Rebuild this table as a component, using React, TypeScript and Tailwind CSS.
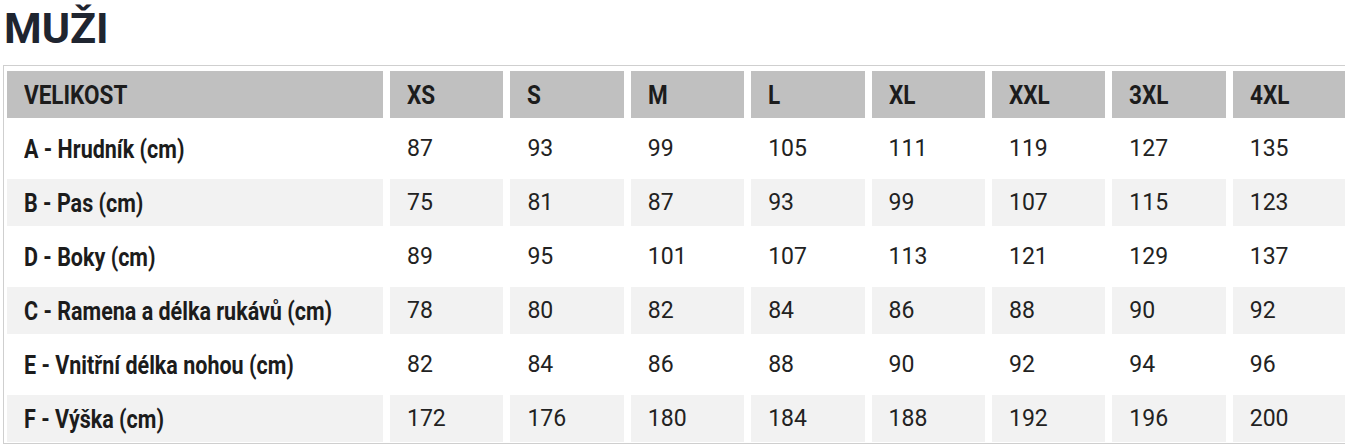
import React from 'react';

const sizes = ['XS', 'S', 'M', 'L', 'XL', 'XXL', '3XL', '4XL'];

const rows: { label: string; values: number[] }[] = [
    { label: 'A - Hrudník (cm)', values: [87, 93, 99, 105, 111, 119, 127, 135] },
    { label: 'B - Pas (cm)', values: [75, 81, 87, 93, 99, 107, 115, 123] },
    { label: 'D - Boky (cm)', values: [89, 95, 101, 107, 113, 121, 129, 137] },
    { label: 'C - Ramena a délka rukávů (cm)', values: [78, 80, 82, 84, 86, 88, 90, 92] },
    { label: 'E - Vnitřní délka nohou (cm)', values: [82, 84, 86, 88, 90, 92, 94, 96] },
    { label: 'F - Výška (cm)', values: [172, 176, 180, 184, 188, 192, 196, 200] },
];

// condensed bold look: larger Roboto squeezed horizontally
const HeadText: React.FC<{ children: React.ReactNode }> = ({ children }) => (
    <span className="inline-block origin-left scale-x-[0.9] text-[25px] font-bold whitespace-nowrap">{children}</span>
);

const LabelText: React.FC<{ children: React.ReactNode }> = ({ children }) => (
    <span className="inline-block origin-left scale-x-[0.86] text-[25px] font-bold whitespace-nowrap">{children}</span>
);

const App: React.FC = () => {
    return (
        <div className="w-[1345px] h-[446px] overflow-hidden bg-white font-['Roboto',sans-serif]">
            <h1 className="pl-[4px] pt-[4px] h-[65px] text-[43px] leading-[48px] font-bold text-[#1f2530]">MUŽI</h1>
            <div className="ml-[3px] w-[1360px] border border-[#cfcfcf] pt-[5px] pl-[3px] pb-[1px]">
                <div className="grid grid-cols-[376px_repeat(8,113.4px)] gap-x-[7px] gap-y-[7px] text-[#1c1c1c]">
                    <div className="h-[47px] bg-[#c0c0c0] pl-[17px] pt-[2px] flex items-center">
                        <HeadText>VELIKOST</HeadText>
                    </div>
                    {sizes.map((s) => (
                        <div key={s} className="h-[47px] bg-[#c0c0c0] pl-[17px] pt-[2px] flex items-center">
                            <HeadText>{s}</HeadText>
                        </div>
                    ))}
                    {rows.map((row, i) => {
                        const bg = i % 2 === 1 ? 'bg-[#f2f2f2]' : 'bg-white';
                        return (
                            <React.Fragment key={row.label}>
                                <div className={`h-[47px] ${bg} pl-[17px] pt-[2px] flex items-center`}>
                                    <LabelText>{row.label}</LabelText>
                                </div>
                                {row.values.map((v, j) => (
                                    <div key={j} className={`h-[47px] ${bg} pl-[17px] pt-[2px] flex items-center text-[23px] text-[#222]`}>
                                        {v}
                                    </div>
                                ))}
                            </React.Fragment>
                        );
                    })}
                </div>
            </div>
        </div>
    );
};

export default App;
